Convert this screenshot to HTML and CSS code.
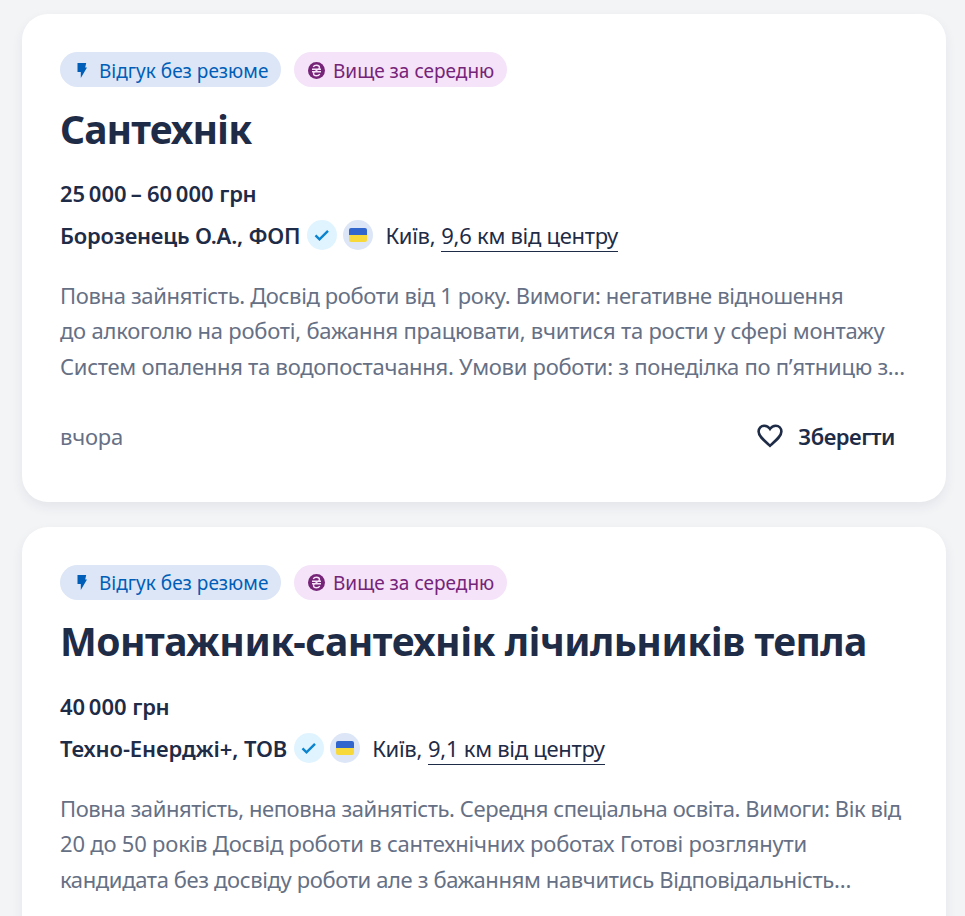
FILE: index.html
```html
<!DOCTYPE html>
<html lang="uk">
<head>
    <meta charset="UTF-8">
    <meta name="viewport" content="width=device-width, initial-scale=1.0">
    <title>Вакансії</title>
    <link rel="stylesheet" href="styles.css">
</head>
<body>
    <svg class="sprite" width="0" height="0">
        <symbol id="bolt" viewBox="0 0 10 15">
            <path d="M.5 0h8.700L8.200 4.500H10L3.800 15V9H.5z"/>
        </symbol>
        <symbol id="hryvnia" viewBox="0 0 17 17">
            <circle cx="8.5" cy="8.5" r="8.5"/>
            <path d="M5.300 5C5.800 3.700 7 3.200 8.500 3.200c1.900 0 3 .9 3 2.300 0 2.900-6 3.100-6 6 0 1.400 1.200 2.300 3 2.300 1.500 0 2.700-.6 3.200-1.800M4 7.300h9M4 9.700h9" fill="none" stroke="#f4e3f9" stroke-width="1.400"/>
        </symbol>
        <symbol id="check" viewBox="0 0 30 30">
            <path d="M8.500 15.300l4 4L21 10.800" fill="none" stroke="#0a84cf" stroke-width="2.400"/>
        </symbol>
        <symbol id="heart" viewBox="0 0 26 24">
            <path d="M13 21.700C6.500 16 1.600 12.200 1.600 7.600c0-3.400 2.500-5.900 5.700-5.900 2.300 0 4.400 1.200 5.700 3.200 1.300-2 3.400-3.200 5.700-3.200 3.200 0 5.700 2.500 5.700 5.900 0 4.600-4.900 8.400-11.400 14.100z" fill="none" stroke="#1f2c47" stroke-width="2.600"/>
        </symbol>
    </svg>

    <div class="card">
        <div class="labels labels-first">
            <span class="label label-blue"><svg class="bolt"><use href="#bolt"/></svg>Відгук без резюме</span>
            <span class="label label-pink"><svg class="coin"><use href="#hryvnia"/></svg>Вище за середню</span>
        </div>
        <h2 class="title-short">Сантехнік</h2>
        <div class="salary">25&#8239;000&#8202;<span class="dash">–</span>&#8202;60&#8239;000 грн</div>
        <div class="company">
            <span class="name name-first">Борозенець О.А., ФОП</span>
            <span class="badge badge-check"><svg><use href="#check"/></svg></span>
            <span class="badge badge-flag"><span class="flag"></span></span>
            <span class="city">Київ,</span>
            <a class="distance" href="#">9,6 км від центру</a>
        </div>
        <p class="text">
            <span class="line a1">Повна зайнятість. Досвід роботи від 1 року. Вимоги: негативне відношення</span>
            <span class="line a2">до алкоголю на роботі, бажання працювати, вчитися та рости у сфері монтажу</span>
            <span class="line a3">Систем опалення та водопостачання. Умови роботи: з понеділка по п’ятницю з…</span>
        </p>
        <div class="footer">
            <span class="date">вчора</span>
            <button type="button" class="save"><svg><use href="#heart"/></svg>Зберегти</button>
        </div>
    </div>

    <div class="card">
        <div class="labels">
            <span class="label label-blue"><svg class="bolt"><use href="#bolt"/></svg>Відгук без резюме</span>
            <span class="label label-pink"><svg class="coin"><use href="#hryvnia"/></svg>Вище за середню</span>
        </div>
        <h2 class="title-long">Монтажник-сантехнік лічильників тепла</h2>
        <div class="salary">40&#8239;000 грн</div>
        <div class="company">
            <span class="name name-second">Техно-Енерджі+, ТОВ</span>
            <span class="badge badge-check"><svg><use href="#check"/></svg></span>
            <span class="badge badge-flag"><span class="flag"></span></span>
            <span class="city">Київ,</span>
            <a class="distance" href="#">9,1 км від центру</a>
        </div>
        <p class="text">
            <span class="line b1">Повна зайнятість, неповна зайнятість. Середня спеціальна освіта. Вимоги: Вік від</span>
            <span class="line b2">20 до 50 років Досвід роботи в сантехнічних роботах Готові розглянути</span>
            <span class="line b3">кандидата без досвіду роботи але з бажанням навчитись Відповідальність…</span>
        </p>
    </div>
</body>
</html>
```
FILE: styles.css
```css
* {
    box-sizing: border-box;
}

body {
    height: 916px;
    margin: 0;
    padding: 14px 19px 0 22px;
    overflow: hidden;
    background-color: #f3f4f6;
    color: #1f2c47;
    font-family: "Noto Sans", "Open Sans", sans-serif;
    font-size: 22px;
    line-height: 36px;
}

.sprite {
    display: block;
}

.card {
    height: 488px;
    margin-bottom: 25px;
    padding: 38px;
    background-color: #fff;
    border-radius: 26px;
    box-shadow: 0 5px 12px rgba(31, 44, 71, 0.07);
}

.labels {
    display: flex;
    gap: 13px;
}

.label {
    display: flex;
    align-items: center;
    height: 35px;
    border-radius: 18px;
    font-size: 19px;
    white-space: nowrap;
}

.labels-first .label {
    padding-top: 2px;
}

.label-blue {
    width: 221px;
    padding-left: 17px;
    background-color: #dce6f7;
    color: #005eb8;
}

.label-pink {
    width: 213px;
    padding-left: 14px;
    background-color: #f4e3f9;
    color: #762478;
}

.bolt {
    width: 10px;
    height: 15px;
    margin-right: 12px;
    fill: #005eb8;
}

.coin {
    width: 17px;
    height: 17px;
    margin-right: 8px;
    fill: #762478;
}

h2 {
    margin: 17px 0 23px;
    font-size: 39px;
    line-height: 48px;
    white-space: nowrap;
}

.title-short {
    margin: 18px 0 22px;
    letter-spacing: -0.9px;
}

.title-long {
    letter-spacing: -0.53px;
}

.salary,
.name,
.save {
    font-weight: 600;
}

.salary {
    letter-spacing: -0.3px;
}

.dash {
    margin: 0 3px 0 2px;
}

.name-first {
    letter-spacing: -0.22px;
}

.name-second {
    letter-spacing: -0.11px;
}

.company {
    display: flex;
    align-items: center;
    height: 36px;
    margin-top: 6px;
    white-space: nowrap;
}

.badge {
    display: flex;
    align-items: center;
    justify-content: center;
    width: 30px;
    height: 30px;
    margin-left: 6.5px;
    border-radius: 50%;
}

.badge svg {
    width: 30px;
    height: 30px;
}

.badge-check {
    background-color: #e0f4ff;
}

.badge-flag {
    background-color: #dce6f7;
}

.flag {
    width: 18px;
    height: 14px;
    border-radius: 2px;
    background: linear-gradient(#3366cc 50%, #f7d93b 50%);
}

.city {
    margin: 0 6px 0 12px;
    letter-spacing: -0.3px;
}

.distance {
    height: 34px;
    line-height: 34px;
    border-bottom: 1px solid #1f2c47;
    color: inherit;
    letter-spacing: -0.28px;
    text-decoration: none;
}

.text {
    margin: 25px 0 0;
    color: #667085;
    line-height: 35.4px;
}

.line {
    display: block;
    white-space: nowrap;
}

.a1 {
    letter-spacing: -0.35px;
}

.a2 {
    letter-spacing: -0.23px;
}

.a3 {
    letter-spacing: -0.27px;
}

.b1 {
    letter-spacing: -0.42px;
}

.b2 {
    letter-spacing: -0.2px;
}

.b3 {
    letter-spacing: -0.37px;
}

.footer {
    display: flex;
    justify-content: space-between;
    margin-top: 34px;
    padding-right: 13px;
}

.date {
    color: #667085;
    letter-spacing: -0.2px;
}

.save {
    display: flex;
    align-items: center;
    padding: 0;
    border: none;
    background: none;
    color: inherit;
    font-family: inherit;
    font-size: 22px;
    letter-spacing: -0.5px;
    line-height: 36px;
}

.save svg {
    width: 26px;
    height: 24px;
    margin-right: 15px;
}
```
